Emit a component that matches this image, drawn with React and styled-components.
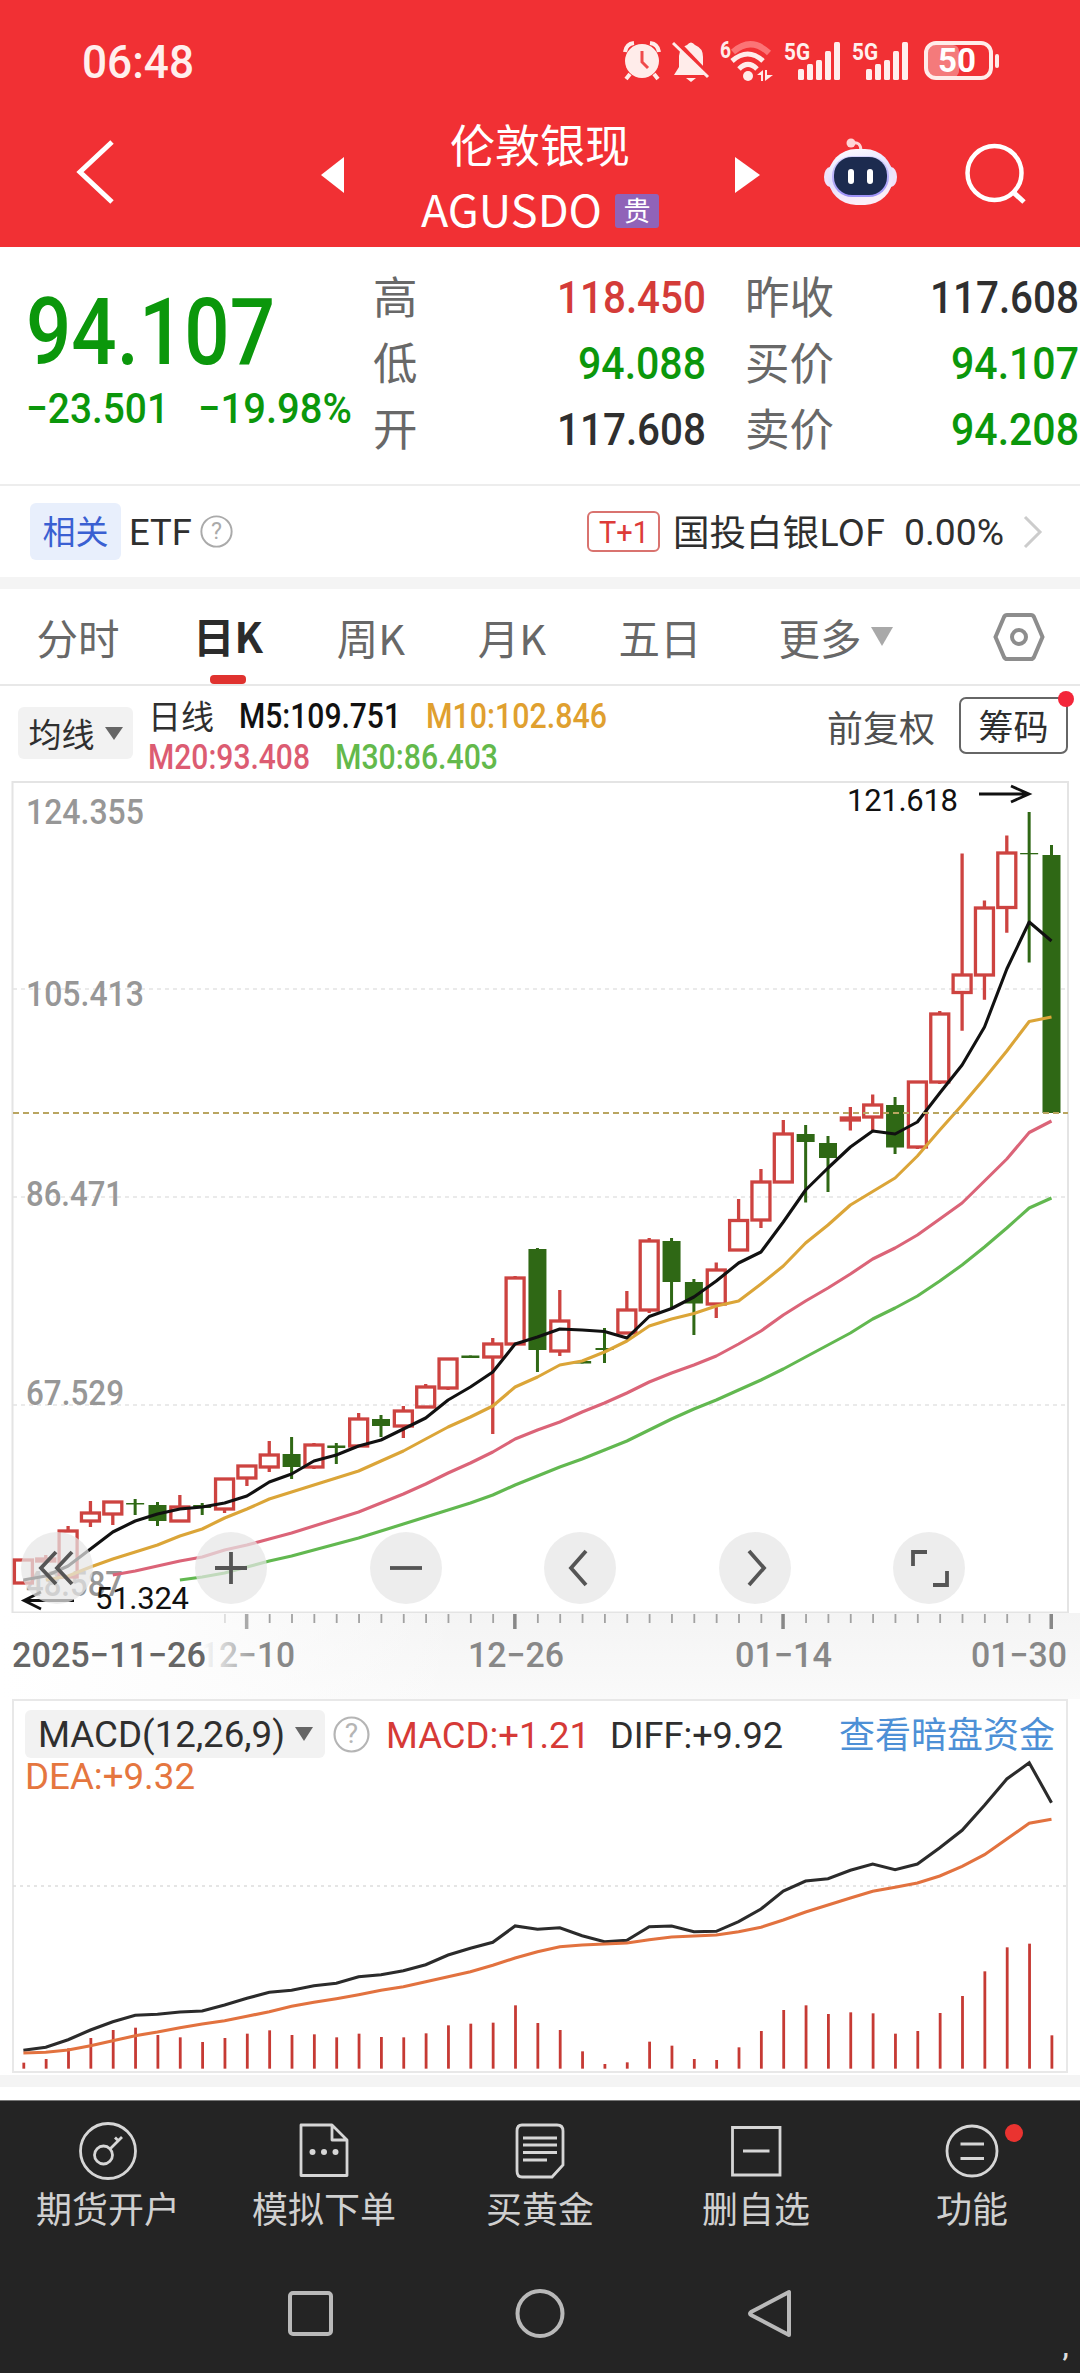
import React from 'react';
import styled, { createGlobalStyle } from 'styled-components';

const CJK = '"Noto Sans CJK SC", sans-serif';

const GlobalStyle = createGlobalStyle`
  * { box-sizing: border-box; }
  body { margin: 0; background: #fff; }
`;

const Screen = styled.div`
  width: 1080px;
  height: 2373px;
  overflow: hidden;
  display: flex;
  flex-direction: column;
  background: #fff;
  color: #2f2f2f;
  font-family: Roboto, ${CJK};
`;

const FitSvg = styled.svg`
  display: block;
  flex: none;
  overflow: visible;
  text { font-family: ${p => p.$face || 'Roboto'}, ${CJK}; font-size: ${p => p.$size}px; font-weight: ${p => p.$weight || 400}; fill: ${p => p.$color}; }
`;
function Fit({ children, w, size, color = '#2f2f2f', weight, face }) {
  const h = Math.round(size * 0.72);
  return (
    <FitSvg width={w} height={h} $size={size} $weight={weight} $color={color} $face={face}>
      <text x="0" y={h} textLength={w} lengthAdjust="spacingAndGlyphs">{children}</text>
    </FitSvg>
  );
}

const Header = styled.header`
  height: 247px;
  flex: none;
  background: #f13034;
  display: flex;
  flex-direction: column;
`;
const StatusBar = styled.div`
  height: 122px;
  padding: 0 81px 0 82px;
  display: flex;
  align-items: center;
  justify-content: space-between;
`;
const TitleBar = styled.div`
  height: 125px;
  display: grid;
  grid-template-columns: 321px 100px 238px 165px 141px 115px;
`;
const TitleCell = styled.div`
  padding-top: ${p => p.$top}px;
  padding-left: ${p => p.$left || 0}px;
  svg { display: block; }
`;
const TitleCenter = styled.div`
  display: flex;
  flex-direction: column;
  align-items: center;
`;
const Name = styled.div`
  font: 400 45px/44px ${CJK};
  color: #fff;
  white-space: nowrap;
`;
const CodeRow = styled.div`
  display: flex;
  align-items: center;
  gap: 13px;
  height: 34px;
  margin-top: 28px;
`;
const Badge = styled.span`
  width: 44px;
  height: 34px;
  border-radius: 3px;
  background: #9063b8;
  color: #fff;
  text-align: center;
  font: 400 27px/32px ${CJK};
`;

const Quote = styled.section`
  height: 239px;
  flex: none;
  border-bottom: 2px solid #ededed;
  display: grid;
  grid-template-columns: 373px 333px 39px 335px;
`;
const PriceBlock = styled.div`padding: 51px 0 0 26px;`;
const ChangeRow = styled.div`
  display: flex;
  gap: 29px;
  margin-top: 28px;
`;
const Stats = styled.div`
  padding-top: 17px;
  grid-column: ${p => p.$col};
`;
const StatRow = styled.div`
  height: 66px;
  display: flex;
  align-items: center;
  justify-content: space-between;
  padding-right: ${p => p.$right || 0}px;
`;
const StatLabel = styled.span`
  font: 400 44.5px/62px ${CJK};
  height: 66px;
  color: #686868;
`;

const EtfRow = styled.section`
  height: 91px;
  flex: none;
  display: flex;
  align-items: center;
  padding: 0 37px 0 30px;
`;
const Related = styled.span`
  width: 91px;
  height: 57px;
  border-radius: 6px;
  background: #e8effc;
  color: #3a60d2;
  text-align: center;
  font: 400 33px/55px ${CJK};
  margin-right: 8px;
`;
const T1 = styled.span`
  width: 73px;
  height: 41px;
  border: 2px solid #d9736f;
  border-radius: 6px;
  display: flex;
  align-items: center;
  justify-content: center;
  margin: 0 13px 0 auto;
`;
const Fund = styled.span`
  width: 231px;
  height: 56px;
  white-space: nowrap;
  font: 400 36.5px/53px ${CJK};
`;
const Band = styled.div`
  height: 12px;
  flex: none;
  background: #f4f4f4;
`;

const Tabs = styled.nav`
  height: 97px;
  flex: none;
  border-bottom: 2px solid #e8e8e8;
  display: grid;
  grid-template-columns: 156px 144px 142px 140px 156px 195px 147px;
`;
const Tab = styled.div`
  display: flex;
  align-items: center;
  justify-content: center;
  gap: 9px;
  height: 95px;
  font: ${p => (p.$active ? 700 : 400)} 41.5px/92px ${CJK};
  color: ${p => (p.$active ? '#2b2b2b' : '#686868')};
`;
const ActiveTab = styled(Tab)`
  flex-direction: column;
  gap: 0;
  &::after {
    content: '';
    flex: none;
    width: 36px;
    height: 9px;
    margin-top: -6px;
    border-radius: 4px;
    background: #e0322f;
  }
`;
const SettingsTab = styled(Tab)`padding-left: 24px;`;
const Triangle = styled.span`
  width: 0;
  border: solid transparent;
  border-width: ${p => p.$h}px ${p => p.$w / 2}px 0;
  border-top-color: ${p => p.$color};
`;

const MaRow = styled.section`
  height: 95px;
  flex: none;
  display: flex;
  padding: 0 12px 0 18px;
`;
const Picker = styled.span`
  width: ${p => p.$w}px;
  height: ${p => p.$h}px;
  margin-top: ${p => p.$top || 0}px;
  flex: none;
  border-radius: 6px;
  background: #f2f2f2;
  display: flex;
  align-items: center;
  justify-content: center;
  gap: 10px;
  font: 400 33px/1 ${CJK};
`;
const MaValues = styled.div`
  flex: 1;
  padding: 11px 0 0 15px;
`;
const MaLine = styled.div`
  display: flex;
  align-items: center;
  height: 36px;
  gap: 25px;
  margin-bottom: 5px;
  font: 400 33px/33px ${CJK};
`;
const Adjust = styled.span`
  font: 400 36px/80px ${CJK};
  color: #505050;
  margin-right: 24px;
`;
const Chips = styled.span`
  position: relative;
  width: 109px;
  height: 57px;
  margin-top: 11px;
  border: 2px solid #666;
  border-radius: 7px;
  text-align: center;
  font: 400 35px/52px ${CJK};
`;
const Dot = styled.i`
  position: absolute;
  top: ${p => p.$top}px;
  right: ${p => p.$right}px;
  width: ${p => p.$d}px;
  height: ${p => p.$d}px;
  border-radius: 50%;
  background: ${p => p.$color || '#f3263a'};
`;

const ChartArea = styled.section`
  position: relative;
  height: 832px;
  flex: none;
  svg { display: block; }
`;
const Controls = styled.div`
  position: absolute;
  left: 21px;
  top: 751px;
  display: flex;
  gap: 102.4px;
`;
const Control = styled.button`
  width: 72px;
  height: 72px;
  padding: 0;
  border: 0;
  border-radius: 50%;
  background: rgba(230, 230, 230, 0.72);
`;
const AxisArea = styled.section`
  height: 86px;
  flex: none;
  background: linear-gradient(90deg, #fff 0, #fdfdfd 160px, rgba(255,255,255,0) 460px), linear-gradient(#f4f4f4, #fafafa);
  svg { display: block; }
`;
const ChartText = styled.text`
  font-family: Roboto, ${CJK};
  font-size: ${p => p.$size || 35}px;
  fill: ${p => p.$fill};
`;

const Macd = styled.section`
  height: 374px;
  flex: none;
  margin: 0 12px;
  border: 2px solid #e8e8e8;
  position: relative;
`;
const MacdHead = styled.div`
  display: flex;
  align-items: center;
  height: 48px;
  margin-top: 9px;
  padding: 0 11px 0 11px;
`;
const MacdLink = styled.a`
  margin-left: auto;
  height: 48px;
  font: 400 36px/45px ${CJK};
  color: #4d90d6;
`;
const DeaLine = styled.div`padding: 4px 0 0 11px;`;
const MacdPlot = styled.svg`
  position: absolute;
  left: -14px;
  top: 0;
`;
const Spacer = styled.div`
  height: ${p => p.$h}px;
  flex: none;
`;

const BottomNav = styled.nav`
  height: 160px;
  flex: none;
  background: #242424;
  border-top: 1px solid #777;
  display: grid;
  grid-template-columns: repeat(5, 1fr);
`;
const NavItem = styled.div`
  position: relative;
  display: flex;
  flex-direction: column;
  align-items: center;
  padding-top: 18px;
  font: 400 36px/44px ${CJK};
  color: #d0d0d0;
  svg { display: block; margin-bottom: 2px; }
`;
const SystemNav = styled.footer`
  flex: 1;
  position: relative;
  background: #242424;
  display: flex;
  justify-content: center;
  gap: 170px;
  padding-top: 23px;
`;
const Mark = styled.span`
  position: absolute;
  right: 11px;
  bottom: 11px;
  font: 700 26px/30px Roboto, sans-serif;
  color: #ddd;
`;

const X = i => 23.4 + 22.35 * i;

// [rising, high, body top, body bottom, low] for each trading day
const CANDLES = [
  [1,1560,1560,1583,1583],[1,1555,1559,1561,1563],[1,1526,1531,1577,1577],[1,1501,1513,1521,1527],[1,1502,1502,1514,1525],
  [0,1499,1503,1504.5,1515],[0,1502,1505,1521,1526],[1,1495,1507,1521,1522],[0,1503,1505,1508,1515],[1,1479,1479,1509,1513],
  [1,1466,1466,1478,1486],[1,1441,1455,1467,1472],[0,1437,1454,1467,1479],[1,1443,1445,1467,1469],[0,1443,1445.5,1448,1464],
  [1,1413,1419,1446,1446],[0,1415,1419,1426,1437],[1,1406,1411,1426,1438],[1,1384,1387,1407,1407],[1,1359,1359,1388,1390],
  [0,1355.5,1355.5,1358,1358],[1,1338,1344,1357,1434],[1,1276,1278,1344,1344],[0,1248,1249,1350,1372],[1,1290,1321,1351,1356],
  [0,1361,1361,1363.5,1363.5],[0,1328,1348,1350,1363],[1,1291,1310,1333,1333],[1,1238,1241,1310,1313],[0,1238,1241,1282,1308],
  [0,1279,1282,1303.5,1335],[1,1262.6,1270,1304,1318],[1,1199,1220.5,1250,1251],[1,1169,1182,1220,1228],[1,1120,1134,1182,1182],
  [0,1125,1134,1142,1202.5],[0,1136,1143,1158,1192],[1,1107,1118,1120,1130.5],[1,1094.6,1105,1117,1130],[0,1097,1105,1147.5,1154],
  [1,1082,1082,1147,1149],[1,1011,1014,1082,1084],[1,853.5,975,992.5,1030.7],[1,900.5,908,975,999.7],[1,835.5,853,907.5,932.7],
  [0,812,853,854.3,962.5],[0,845,855,1113,1113],
];
const AVERAGES = [
  ['#62b850', 7, [1580,1577,1573,1567,1561,1556,1550,1544,1538,1531,1524,1517,1510,1503,1495,1485,1476,1467,1459,1450,1441,1430,1419,1409,1400,1390,1380,1369,1357,1345,1333,1319,1308,1296,1281,1265,1247,1228,1208,1198]],
  ['#db6478', 4, [1575,1571,1566,1561,1557,1550,1545,1539,1533,1526,1519,1512,1503,1494,1484,1473,1463,1452,1439,1430,1422,1412,1403,1393,1382,1373,1365,1356,1344,1331,1315,1301,1288,1274,1259,1248,1235,1219,1203,1181,1159,1132.5,1121]],
  ['#dba538', 1, [1580,1576,1567,1559,1552,1545,1536,1529,1518,1509,1499,1492,1485,1478,1471,1461,1451,1439,1427,1417,1406,1387,1377,1365,1361,1352,1341,1326,1319,1313.5,1306,1301,1284,1266,1243,1225,1205,1191.5,1178,1156,1130,1105,1078.5,1051,1021.5,1017]],
  ['#111', 0, [1580,1576,1566,1549,1532,1521,1514,1509,1507,1503,1496,1482,1474,1461,1455,1446,1440,1429,1418,1400,1387,1372,1344,1337,1329,1330,1331.5,1338,1316.5,1308.5,1297,1281,1263,1252,1222,1190,1168,1147,1131,1134,1122,1093,1065,1027,969,922,941]],
];
const DIFF = [1051,1042,1019,990,965,946,943,936,933,915,895,877,871,857,850,830,824,812,794,765,745,727,678,688,683,707,725,721,680,678,695,694,665,627,573,543,536,511,492,509,492,443,391,316,237,188,308];
const DEA = [1059,1057,1050,1037,1022,1007,996,983,972,962,949,935,919,907,896,884,871,860,845,830,815,796,774,755,740,735,732,729,719,711,708,705,695,682,660,636,615,594,574,562,549,528,499,464,417,370,358];
const BARS = [1088,1077,1045,1014,990,983,1005,1012,1026,1014,1001,991,1005,1003,1012,1001,1011,1012,1000,976,971,968,916,969,990,1054,1092,1087,1025,1037,1077,1080,1042,993,930,916,942,937,940,1001,993,939,888,814,742,731,1006];

const points = (ys, from = 0, f = y => y) => ys.map((y, i) => `${X(i + from).toFixed(1)},${f(y).toFixed(1)}`).join(' ');

function Candle({ i, d }) {
  const [up, hi, top, bot, lo] = d;
  const x = X(i);
  if (!up) {
    return (
      <g fill="#2f6815">
        <rect x={x - 1.5} y={hi} width="3" height={lo - hi} />
        <rect x={x - 9} y={top} width="18" height={bot - top} />
      </g>
    );
  }
  return (
    <g stroke="#cd4340" strokeWidth="3.3" fill="none">
      <path d={`M${x} ${hi}V${top}M${x} ${bot}V${lo}`} />
      <rect x={x - 9} y={top} width="18" height={bot - top} />
    </g>
  );
}

function PriceChart() {
  return (
    <svg width="1080" height="832" viewBox="0 781 1080 832">
      <rect x="12.5" y="782" width="1055.5" height="830.5" fill="none" stroke="#e4e4e4" strokeWidth="2" />
      {[989, 1197, 1405].map(y => <path key={y} d={`M13 ${y}H1068`} stroke="#e3e3e3" strokeWidth="1.5" strokeDasharray="4 4" />)}
      {[['124.355', 824, 118], ['105.413', 1006, 118], ['86.471', 1206, 97], ['67.529', 1405, 98], ['48.587', 1596, 97]].map(([t, y, w]) => (
        <ChartText key={t} x="26" y={y} $fill="#979797" $size={35} fontWeight="500" textLength={w} lengthAdjust="spacingAndGlyphs">{t}</ChartText>
      ))}
      {CANDLES.map((d, i) => <Candle key={i} i={i} d={d} />)}
      {AVERAGES.map(([c, from, ys]) => <polyline key={c} points={points(ys, from)} fill="none" stroke={c} strokeWidth="3.1" strokeLinejoin="round" />)}
      <path d="M13 1113H1068" stroke="#b9a561" strokeWidth="2" strokeDasharray="6 4" />
      <ChartText x="847" y="811" $fill="#111" $size={31} textLength="111" lengthAdjust="spacing">121.618</ChartText>
      <path d="M979 794H1028M1011 786L1029 794L1011 802" stroke="#111" strokeWidth="2.8" fill="none" />
      <ChartText x="95" y="1609" $fill="#111" $size={31} textLength="94" lengthAdjust="spacing">51.324</ChartText>
      <path d="M74 1600.500H24M41 1592L24 1600.500L41 1609" stroke="#111" strokeWidth="2.8" fill="none" />
    </svg>
  );
}

const CONTROL_PATHS = [
  'M35 20L20 36L35 52M51 20L36 36L51 52', 'M36 20V52M20 36H52', 'M20 36H52', 'M42 19L27 36L42 53', 'M30 19L45 36L30 53', 'M20 34V20H34M54 39V53H40',
];

function Help({ d, stroke = '#aaa', size }) {
  return (
    <svg width={d} height={d} viewBox="0 0 34 34">
      <circle cx="17" cy="17" r="15.6" fill="none" stroke={stroke} strokeWidth="2" />
      <ChartText x="17" y="25" textAnchor="middle" $size={size} $fill={stroke}>?</ChartText>
    </svg>
  );
}

function Signal() {
  return (
    <svg width="58" height="42" viewBox="0 0 58 42">
      <ChartText x="0" y="20" $size={24} $fill="#fff0ee" fontWeight="700" textLength="26" lengthAdjust="spacingAndGlyphs">5G</ChartText>
      {[[14, 29], [23, 24], [32, 20], [41, 11], [50, 2]].map(([x, y]) => <rect key={x} x={x} y={y} width="6" height={40 - y} rx="1.5" fill="#ffeeed" />)}
    </svg>
  );
}

const StatusIcons = styled.div`
  display: flex;
  align-items: center;
  gap: ${p => p.$gap}px;
`;

function Status() {
  const c = '#ffecea';
  return (
    <StatusBar>
      <Fit w={112} size={46} color="#ffefed" weight={500}>06:48</Fit>
      <StatusIcons $gap={13}>
        <StatusIcons $gap={10.5}>
          <svg width="38" height="42" viewBox="0 0 38 42">
            <circle cx="19" cy="21" r="17" fill={c} />
            <path d="M2 12Q3 4 11 3M27 3Q35 4 36 12" stroke={c} strokeWidth="4" fill="none" />
            <path d="M7 34L3 39M31 34L35 39" stroke={c} strokeWidth="4" />
            <path d="M19 11V22L25 28" stroke="#ef4a4b" strokeWidth="3" fill="none" />
          </svg>
          <svg width="38" height="42" viewBox="0 0 38 42">
            <path d="M7 16Q8 7 15 5Q19 0 23 5Q31 8 31 17V27L35 35H2L7 27Z" fill={c} />
            <path d="M14 38H24L19 42Z" fill={c} />
            <path d="M3 0L38 37" stroke="#f13034" strokeWidth="5" />
            <path d="M1 3L36 37" stroke={c} strokeWidth="3" />
          </svg>
          <svg width="53" height="44" viewBox="0 0 53 44">
            <ChartText x="0" y="19" $size={23} $fill={c} fontWeight="700" textLength="11" lengthAdjust="spacingAndGlyphs">6</ChartText>
            <path d="M13 13Q31 -3 49 14" stroke="#fb7476" strokeWidth="6" fill="none" />
            <path d="M12 22Q28 8 43 22M19 30Q28 21 37 30" stroke={c} strokeWidth="5" fill="none" />
            <circle cx="28" cy="37" r="5" fill={c} />
            <path d="M37 36L43 31V42H41V36ZM45 31V42L53 36H47V31Z" fill={c} />
          </svg>
          <Signal />
          <Signal />
        </StatusIcons>
        <svg width="76" height="40" viewBox="0 0 76 40">
          <rect x="5" y="4" width="31" height="32" rx="6" fill="#f47a7b" />
          <rect x="3" y="2" width="65" height="35" rx="10" fill="none" stroke={c} strokeWidth="4" />
          <rect x="72" y="13" width="4" height="14" rx="2" fill={c} />
          <ChartText x="15" y="31" $size={34} $fill="#fff" fontWeight="700" textLength="38" lengthAdjust="spacingAndGlyphs">50</ChartText>
        </svg>
      </StatusIcons>
    </StatusBar>
  );
}

function Robot() {
  return (
    <svg width="74" height="68" viewBox="0 0 74 68">
      <defs>
        <linearGradient id="shell" x1="0" y1="0" x2="0.3" y2="1">
          <stop offset="0" stopColor="#fff" /><stop offset="0.55" stopColor="#e3dffe" /><stop offset="1" stopColor="#fbeef8" />
        </linearGradient>
        <linearGradient id="rim" x1="0" y1="0" x2="0" y2="1">
          <stop offset="0" stopColor="#d5d3fb" /><stop offset="1" stopColor="#9c90f7" />
        </linearGradient>
      </defs>
      <circle cx="27" cy="5" r="4.500" fill="#ffd6d6" />
      <path d="M28 5Q37 3 37 13" stroke="#ffd6d6" strokeWidth="3" fill="none" />
      <ellipse cx="6" cy="39" rx="6" ry="10" fill="#f0e2fa" />
      <ellipse cx="67" cy="39" rx="6" ry="10" fill="#f0e2fa" />
      <rect x="4" y="11" width="65" height="56" rx="28" fill="url(#shell)" />
      <rect x="8" y="18" width="57" height="41" rx="20" fill="url(#rim)" />
      <rect x="10" y="19" width="53" height="38" rx="18" fill="#1c2b4f" />
      <rect x="24" y="31" width="6" height="15" rx="3" fill="#fff" />
      <rect x="43" y="31" width="6" height="15" rx="3" fill="#fff" />
    </svg>
  );
}

const NAV = [
  ['期货开户', <g key="a"><circle cx="32" cy="32" r="27.500" /><circle cx="27.500" cy="36" r="9" /><path d="M34 30L46 18M39 18.500L43 22.500" /></g>],
  ['模拟下单', <g key="b"><path d="M9 6H40L55 21V56.500H9ZM40 6V21H55" strokeLinejoin="round" /><g fill="#d6d6d6" stroke="none"><circle cx="20.500" cy="33" r="3" /><circle cx="32" cy="33" r="3" /><circle cx="43.500" cy="33" r="3" /></g></g>],
  ['买黄金', <g key="c"><path d="M14 6H49Q55 6 55 12V46L44 58H14Q9 58 9 52V12Q9 6 14 6Z" /><path d="M15 19H49M15 26H49M15 33.500H49M15 41H39" /></g>],
  ['删自选', <g key="d"><path d="M8.500 8.500H56V56H8.500ZM19 32H45.500" /></g>],
  ['功能', <g key="e"><circle cx="32" cy="32" r="25" /><path d="M20.500 25H44M20.500 39.500H44" /></g>],
];

export default function App() {
  const green = '#0b970b';
  return (
    <Screen>
      <GlobalStyle />
      <Header>
        <Status />
        <TitleBar>
          <TitleCell $top={17} $left={76}>
            <svg width="38" height="66" viewBox="0 0 38 66"><path d="M36 3L4 33L36 63" fill="none" stroke="#fff" strokeWidth="5" /></svg>
          </TitleCell>
          <TitleCell $top={35}><svg width="24" height="36"><path d="M23 0V36L0 18Z" fill="#fff" /></svg></TitleCell>
          <TitleCenter>
            <Name>伦敦银现</Name>
            <CodeRow>
              <Fit w={181} size={44} color="#fff" face='"Noto Sans CJK SC"'>AGUSDO</Fit>
              <Badge>贵</Badge>
            </CodeRow>
          </TitleCenter>
          <TitleCell $top={35} $left={76}><svg width="25" height="36"><path d="M0 0V36L25 18Z" fill="#fff" /></svg></TitleCell>
          <TitleCell $top={16}><Robot /></TitleCell>
          <TitleCell $top={20}>
            <svg width="62" height="62" viewBox="0 0 62 62"><circle cx="29.500" cy="31" r="27" fill="none" stroke="#fff" strokeWidth="4.500" /><path d="M48 50L59 60" stroke="#fff" strokeWidth="5" /></svg>
          </TitleCell>
        </TitleBar>
      </Header>

      <Quote>
        <PriceBlock>
          <Fit w={249} size={92} color={green} weight={500}>94.107</Fit>
          <ChangeRow>
            <Fit w={143} size={43} color={green} weight={500}>−23.501</Fit>
            <Fit w={154} size={43} color={green} weight={500}>−19.98%</Fit>
          </ChangeRow>
        </PriceBlock>
        <Stats $col={2}>
          <StatRow><StatLabel>高</StatLabel><Fit w={149} size={45} color="#d43b38" weight={500}>118.450</Fit></StatRow>
          <StatRow><StatLabel>低</StatLabel><Fit w={128} size={45} color={green} weight={500}>94.088</Fit></StatRow>
          <StatRow><StatLabel>开</StatLabel><Fit w={149} size={45} weight={500}>117.608</Fit></StatRow>
        </Stats>
        <Stats $col={4}>
          <StatRow $right={1}><StatLabel>昨收</StatLabel><Fit w={149} size={45} weight={500}>117.608</Fit></StatRow>
          <StatRow $right={1}><StatLabel>买价</StatLabel><Fit w={128} size={45} color={green} weight={500}>94.107</Fit></StatRow>
          <StatRow $right={1}><StatLabel>卖价</StatLabel><Fit w={128} size={45} color={green} weight={500}>94.208</Fit></StatRow>
        </Stats>
      </Quote>

      <EtfRow>
        <Related>相关</Related>
        <Fit w={63} size={37}>ETF</Fit>
        <TitleCell $top={0} $left={8}><Help d={33} size={24} /></TitleCell>
        <T1><Fit w={50} size={31} color="#dd3b38">T+1</Fit></T1>
        <Fund>国投白银LOF</Fund>
        <Fit w={100} size={37}>0.00%</Fit>
        <TitleCell $top={0} $left={19}>
          <svg width="20" height="34" viewBox="0 0 20 34"><path d="M2 2L17 17L2 32" fill="none" stroke="#ccc" strokeWidth="3" /></svg>
        </TitleCell>
      </EtfRow>
      <Band />

      <Tabs>
        <Tab>分时</Tab>
        <ActiveTab $active>日K</ActiveTab>
        <Tab>周K</Tab>
        <Tab>月K</Tab>
        <Tab>五日</Tab>
        <Tab>更多<Triangle $w={22} $h={19} $color="#a9a9a9" /></Tab>
        <SettingsTab>
          <svg width="52" height="50" viewBox="0 0 52 50">
            <path d="M14 3H38Q40 3 41 5L49.500 25L41 45Q40 47 38 47H14Q12 47 11 45L2.500 25L11 5Q12 3 14 3Z" fill="none" stroke="#8d8d8d" strokeWidth="4" />
            <circle cx="26" cy="25" r="7" fill="none" stroke="#8d8d8d" strokeWidth="4" />
          </svg>
        </SettingsTab>
      </Tabs>

      <MaRow>
        <Picker $w={115} $h={52} $top={21}>均线<Triangle $w={18} $h={13} $color="#666" /></Picker>
        <MaValues>
          <MaLine>
            <span>日线</span>
            <Fit w={162} size={35} color="#111" weight={500}>M5:109.751</Fit>
            <Fit w={181} size={35} color="#e0a02f" weight={500}>M10:102.846</Fit>
          </MaLine>
          <MaLine>
            <Fit w={162} size={35} color="#dc5c72" weight={500}>M20:93.408</Fit>
            <Fit w={163} size={35} color="#63b94b" weight={500}>M30:86.403</Fit>
          </MaLine>
        </MaValues>
        <Adjust>前复权</Adjust>
        <Chips>筹码<Dot $top={-8} $right={-8} $d={16} /></Chips>
      </MaRow>

      <ChartArea>
        <PriceChart />
        <Controls>
          {CONTROL_PATHS.map(d => (
            <Control key={d}>
              <svg width="72" height="72" viewBox="0 0 72 72"><path d={d} fill="none" stroke="#555" strokeWidth="3.800" /></svg>
            </Control>
          ))}
        </Controls>
      </ChartArea>

      <AxisArea>
        <svg width="1080" height="86" viewBox="0 1613 1080 86">
          <defs>
            <linearGradient id="fade" gradientUnits="userSpaceOnUse" x1="203" y1="0" x2="265" y2="0">
              <stop offset="0" stopColor="#888" stopOpacity="0" /><stop offset="1" stopColor="#888" />
            </linearGradient>
          </defs>
          {CANDLES.map((_, i) => i < 9 ? null : (i - 10) % 12 === 0
            ? <rect key={i} x={X(i) - 2} y="1614" width="3.500" height="15" fill={i === 10 ? '#aaa' : '#888'} />
            : <rect key={i} x={X(i) - 0.5} y="1614" width="1.800" height="9" fill={i === 9 ? '#ddd' : '#a2a2a2'} />)}
          <ChartText x="12" y="1667" $fill="#666" fontWeight="500" textLength="194" lengthAdjust="spacingAndGlyphs">2025−11−26</ChartText>
          <ChartText x="200" y="1667" $fill="url(#fade)" fontWeight="500" textLength="95" lengthAdjust="spacingAndGlyphs">12−10</ChartText>
          <ChartText x="468" y="1667" $fill="#888" fontWeight="500" textLength="96" lengthAdjust="spacingAndGlyphs">12−26</ChartText>
          <ChartText x="735" y="1667" $fill="#888" fontWeight="500" textLength="97" lengthAdjust="spacingAndGlyphs">01−14</ChartText>
          <ChartText x="971" y="1667" $fill="#888" fontWeight="500" textLength="96" lengthAdjust="spacingAndGlyphs">01−30</ChartText>
        </svg>
      </AxisArea>

      <Macd>
        <MacdPlot width="1080" height="370" viewBox="0 1701 1080 370">
          <path d="M13 1886H1068" stroke="#ddd" strokeWidth="1.500" strokeDasharray="3 4" />
          {BARS.map((v, i) => <rect key={i} x={X(i) - 1} y={1700 + v / 3} width="2.800" height={(1106 - v) / 3} fill="#c63a34" />)}
          <polyline points={points(DIFF, 0, v => 1700 + v / 3)} fill="none" stroke="#2b2b2b" strokeWidth="3.100" />
          <polyline points={points(DEA, 0, v => 1700 + v / 3)} fill="none" stroke="#e2723f" strokeWidth="3.100" />
        </MacdPlot>
        <MacdHead>
          <Picker $w={300} $h={48}>
            <Fit w={247} size={36}>MACD(12,26,9)</Fit>
            <Triangle $w={19} $h={14} $color="#666" />
          </Picker>
          <TitleCell $top={0} $left={8}><Help d={37} size={26} stroke="#b5b5b5" /></TitleCell>
          <TitleCell $top={0} $left={16}><Fit w={204} size={37} color="#d63a37">MACD:+1.21</Fit></TitleCell>
          <TitleCell $top={0} $left={20}><Fit w={173} size={37}>DIFF:+9.92</Fit></TitleCell>
          <MacdLink>查看暗盘资金</MacdLink>
        </MacdHead>
        <DeaLine><Fit w={170} size={37} color="#e5763f">DEA:+9.32</Fit></DeaLine>
      </Macd>
      <Spacer $h={2} />
      <Band />
      <Spacer $h={13} />

      <BottomNav>
        {NAV.map(([label, icon]) => (
          <NavItem key={label}>
            <svg width="64" height="64" viewBox="0 0 64 64" fill="none" stroke="#d6d6d6" strokeWidth="2.800">{icon}</svg>
            {label}
            {label === '功能' && <Dot $top={23} $right={57} $d={18} $color="#ea3330" />}
          </NavItem>
        ))}
      </BottomNav>
      <SystemNav>
        <svg width="60" height="60" viewBox="0 0 60 60"><rect x="10" y="10" width="41" height="41" rx="3" fill="none" stroke="#b9b9b9" strokeWidth="4" /></svg>
        <svg width="60" height="60" viewBox="0 0 60 60"><circle cx="30" cy="30.500" r="22.500" fill="none" stroke="#b9b9b9" strokeWidth="4" /></svg>
        <svg width="60" height="60" viewBox="0 0 60 60"><path d="M49 9V52L11 32Q9 30.500 11 29Z" fill="none" stroke="#b9b9b9" strokeWidth="4" strokeLinejoin="round" /></svg>
        <Mark>,</Mark>
      </SystemNav>
    </Screen>
  );
}
